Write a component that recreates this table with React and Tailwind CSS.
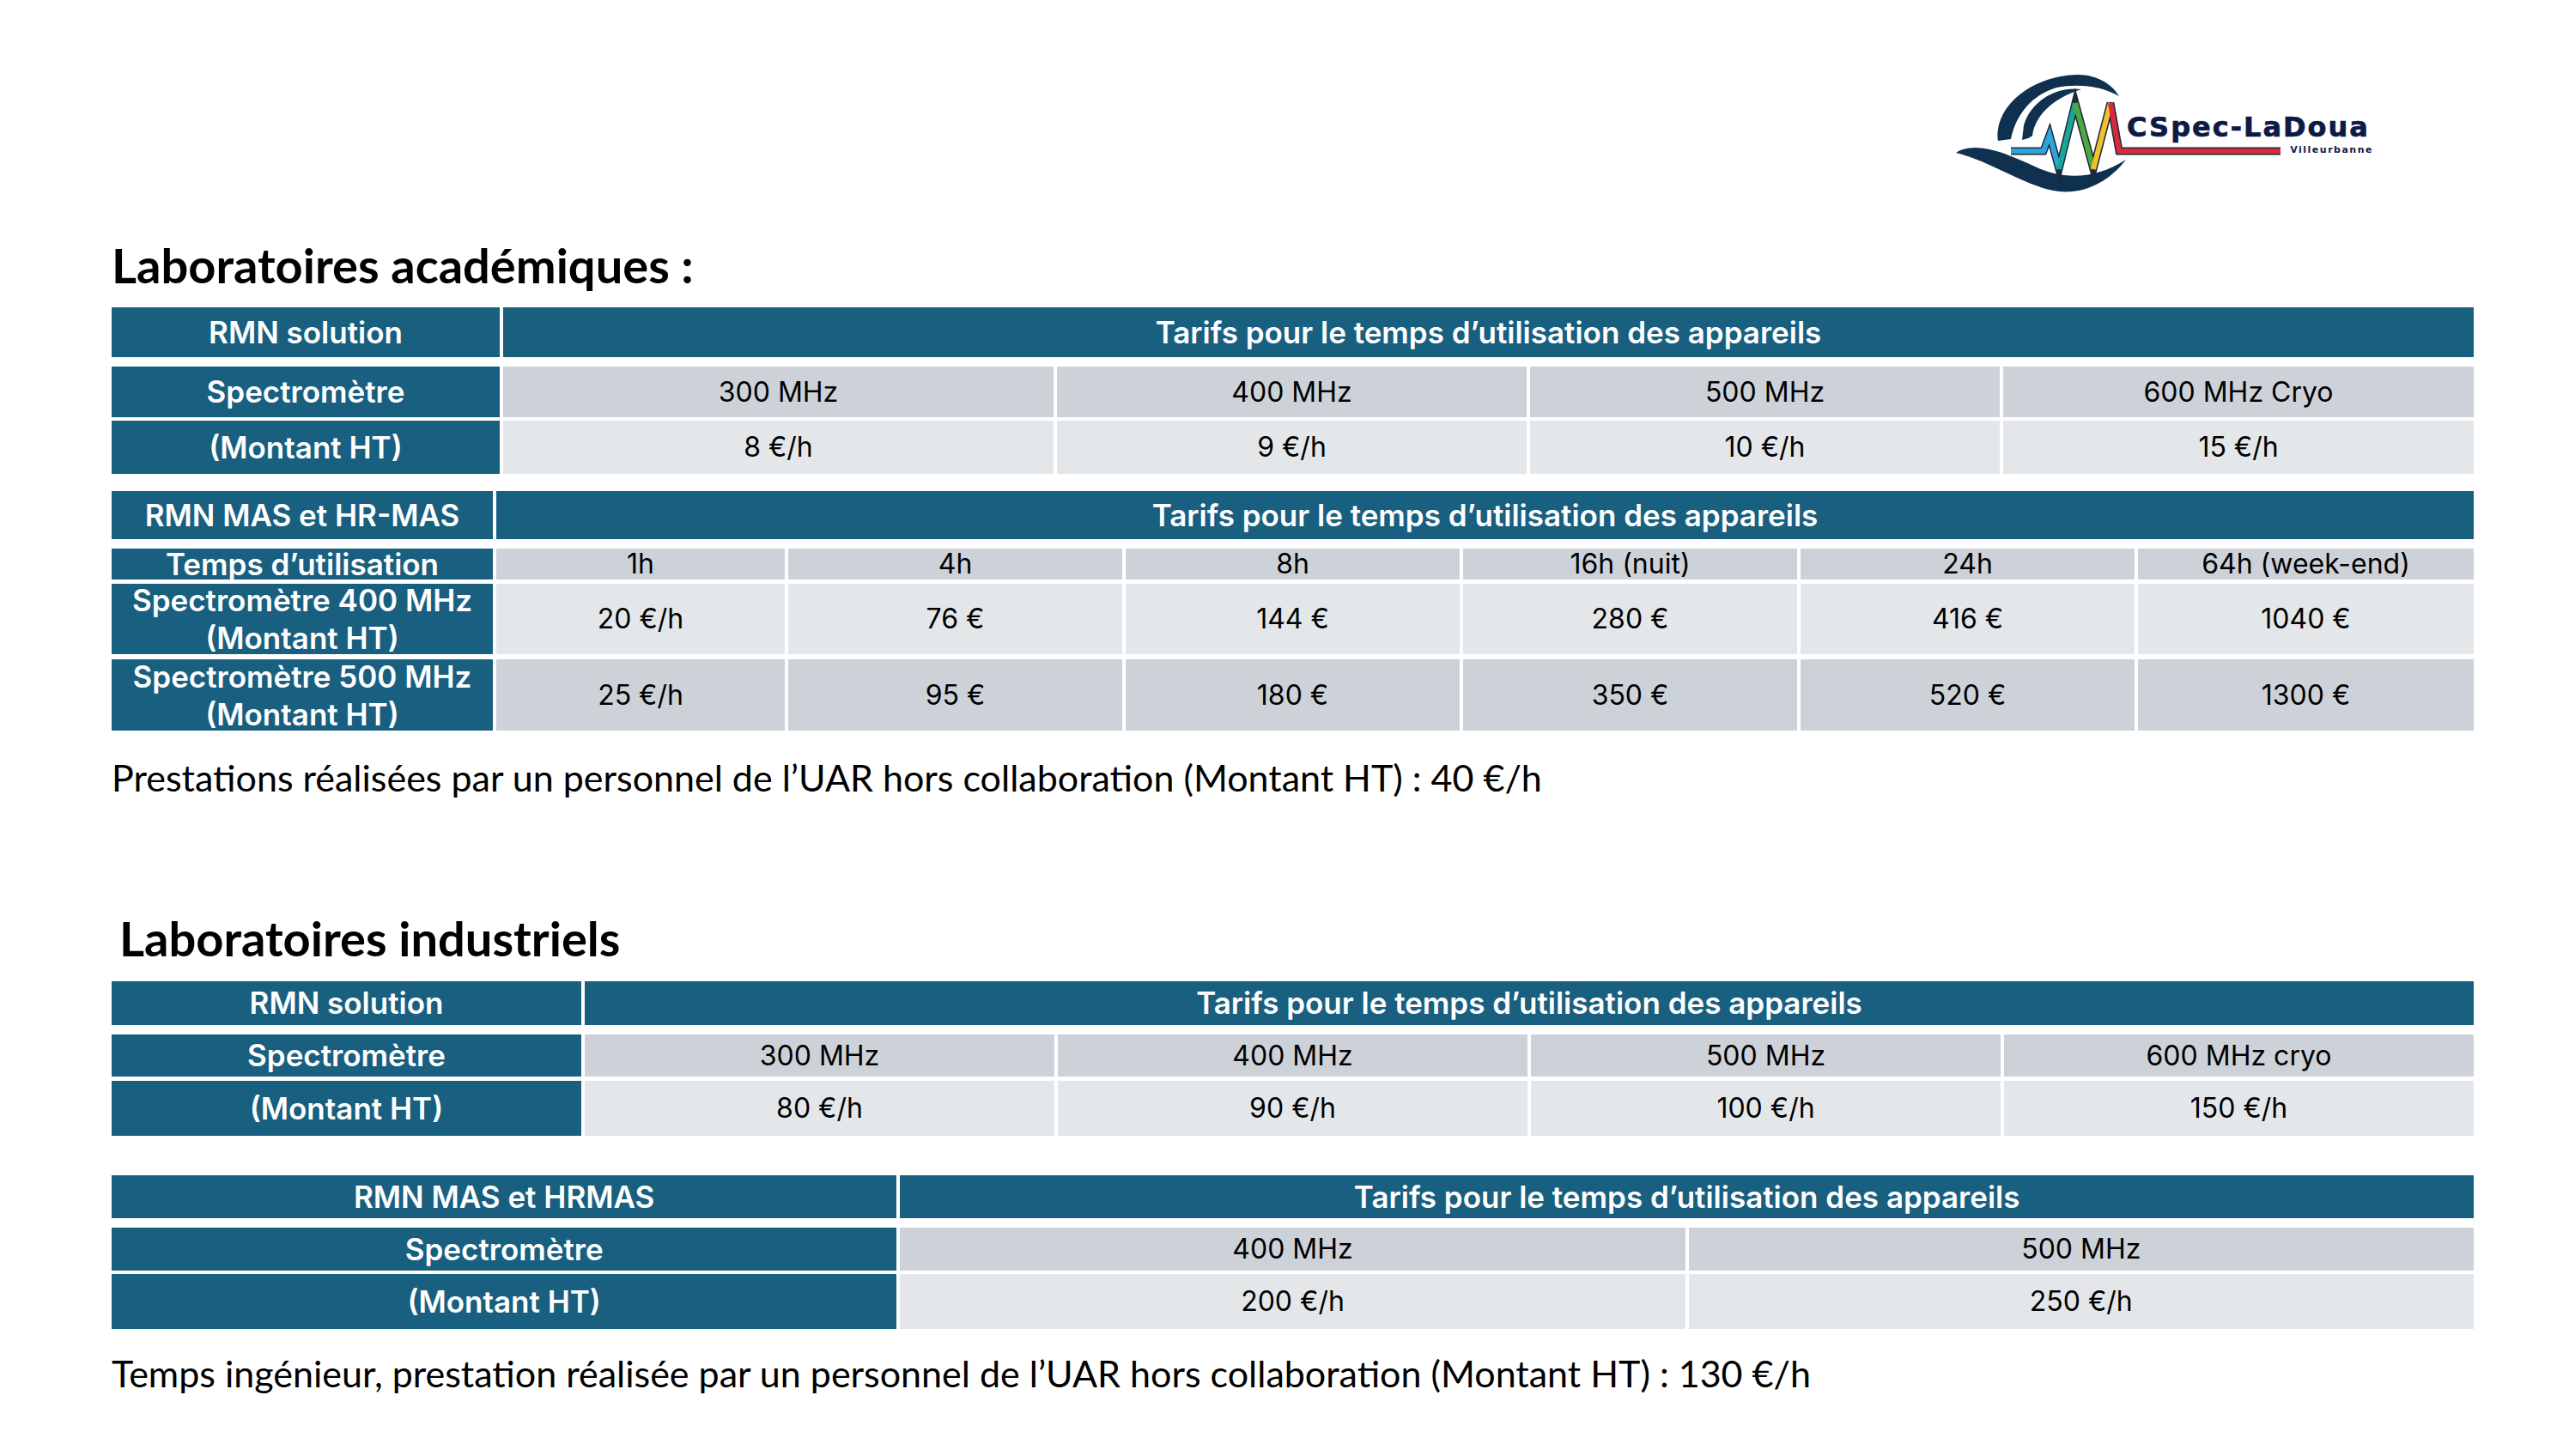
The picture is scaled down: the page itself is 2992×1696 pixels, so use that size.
import React from "react";

const head = "bg-[#185f80] text-white font-semibold text-[35px]";
const dark = "bg-[#cdd2d9] text-black";
const light = "bg-[#e4e7ea] text-black";

function Cell({ tone, lead = "leading-none", className = "", children }) {
  return (
    <div className={`flex items-center justify-center text-center ${lead} ${tone} ${className}`}>
      {children}
    </div>
  );
}

const TARIFS = "Tarifs pour le temps d’utilisation des appareils";

function Logo() {
  return (
    <div className="relative w-[500px] h-[150px]">
      <svg width="500" height="150" viewBox="0 0 500 150" className="absolute inset-0">
        <path d="M57 84 C52 45 95 8 150 7 C172 7 190 18 198 32 C178 20 150 17 125 22 C98 30 78 52 72 82 Z" fill="#10304f" />
        <path d="M154 24 C125 20 95 38 87 66 L85 83 C90 82 95 80 97 78 C100 55 120 35 154 24 Z" fill="#10304f" />
        <path d="M8 98 C30 84 62 96 100 114 C132 129 168 130 206 106 C186 132 158 146 128 143 C90 138 50 108 8 98 Z" fill="#10304f" />
        <polyline points="72,96 110,96 117,77 128,117 147,40 168,117 188,40 198,96 386,96" stroke="#1b2a3a" strokeWidth="9" fill="none" />
        <polyline points="72,96 110,96 117,77 128,117" stroke="#2ea3dc" strokeWidth="6" fill="none" />
        <polyline points="128,117 147,40" stroke="#1ba596" strokeWidth="6" fill="none" />
        <polyline points="147,40 168,117" stroke="#4fa83e" strokeWidth="6" fill="none" />
        <polyline points="168,117 188,40" stroke="#f0c22f" strokeWidth="6" fill="none" />
        <polyline points="188,40 198,96 386,96" stroke="#d92a3d" strokeWidth="6" fill="none" />
      </svg>
      <span className="absolute left-[207px] top-[52px] font-['DejaVu_Sans',sans-serif] font-bold text-[32px] leading-none tracking-[2px] text-[#0d1a46] [-webkit-text-stroke:0.7px_#0d1a46]">
        CSpec-LaDoua
      </span>
      <span className="absolute right-[6px] top-[89px] font-['DejaVu_Sans',sans-serif] font-bold text-[11px] leading-none tracking-[1.5px] text-[#0d1a46]">
        Villeurbanne
      </span>
    </div>
  );
}

function App() {
  const acadFreq = ["300 MHz", "400 MHz", "500 MHz", "600 MHz Cryo"];
  const acadPrice = ["8 €/h", "9 €/h", "10 €/h", "15 €/h"];
  const durations = ["1h", "4h", "8h", "16h (nuit)", "24h", "64h (week-end)"];
  const s400 = ["20 €/h", "76 €", "144 €", "280 €", "416 €", "1040 €"];
  const s500 = ["25 €/h", "95 €", "180 €", "350 €", "520 €", "1300 €"];
  const indFreq = ["300 MHz", "400 MHz", "500 MHz", "600 MHz cryo"];
  const indPrice = ["80 €/h", "90 €/h", "100 €/h", "150 €/h"];

  const cols1 = "grid grid-cols-[452px_641px_547px_547px_1fr] gap-x-[4px]";
  const cols2 = "grid grid-cols-[444px_336px_389px_389px_389px_389px_1fr] gap-x-[4px]";

  return (
    <div className="w-[2992px] h-[1696px] bg-white overflow-hidden font-['Inter',sans-serif] text-[32px] text-black">
      <div className="flex justify-end pt-[80px] pr-[222px]">
        <Logo />
      </div>

      <h1 className="mt-[45px] pl-[130px] font-['Lato',sans-serif] font-bold text-[56px] leading-[67px]">
        Laboratoires académiques :
      </h1>

      <div className="ml-[130px] w-[2751px] mt-[16px]">
        <div className="grid grid-cols-[452px_1fr] grid-rows-[58px] gap-x-[4px]">
          <Cell tone={head}>RMN solution</Cell>
          <Cell tone={head}>{TARIFS}</Cell>
        </div>
        <div className={`${cols1} grid-rows-[59px] mt-[11px]`}>
          <Cell tone={head}>Spectromètre</Cell>
          {acadFreq.map((f) => (
            <Cell key={f} tone={dark}>{f}</Cell>
          ))}
        </div>
        <div className={`${cols1} grid-rows-[62px] mt-[4px]`}>
          <Cell tone={head}>(Montant HT)</Cell>
          {acadPrice.map((p) => (
            <Cell key={p} tone={light}>{p}</Cell>
          ))}
        </div>

        <div className="grid grid-cols-[444px_1fr] grid-rows-[56px] gap-x-[4px] mt-[20px]">
          <Cell tone={head}>RMN MAS et HR-MAS</Cell>
          <Cell tone={head}>{TARIFS}</Cell>
        </div>
        <div className={`${cols2} grid-rows-[36px] mt-[11px]`}>
          <Cell tone={head}>Temps d’utilisation</Cell>
          {durations.map((d) => (
            <Cell key={d} tone={dark}>{d}</Cell>
          ))}
        </div>
        <div className={`${cols2} grid-rows-[82px] mt-[5px]`}>
          <Cell tone={head} lead="leading-[44px]">
            Spectromètre 400 MHz
            <br />
            (Montant HT)
          </Cell>
          {s400.map((v) => (
            <Cell key={v} tone={light}>{v}</Cell>
          ))}
        </div>
        <div className={`${cols2} grid-rows-[83px] mt-[6px]`}>
          <Cell tone={head} lead="leading-[44px]">
            Spectromètre 500 MHz
            <br />
            (Montant HT)
          </Cell>
          {s500.map((v) => (
            <Cell key={v} tone={dark}>{v}</Cell>
          ))}
        </div>
      </div>

      <p className="mt-[29px] pl-[130px] font-['Lato',sans-serif] text-[43px] leading-[52px]">
        Prestations réalisées par un personnel de l’UAR hors collaboration (Montant HT) : 40 €/h
      </p>

      <h1 className="mt-[127px] pl-[139px] font-['Lato',sans-serif] font-bold text-[56px] leading-[67px]">
        Laboratoires industriels
      </h1>

      <div className="ml-[130px] w-[2751px] mt-[17px]">
        <div className="grid grid-cols-5 grid-rows-[51px] gap-x-[4px]">
          <Cell tone={head}>RMN solution</Cell>
          <Cell tone={head} className="col-span-4">{TARIFS}</Cell>
        </div>
        <div className="grid grid-cols-5 grid-rows-[49px] gap-x-[4px] mt-[11px]">
          <Cell tone={head}>Spectromètre</Cell>
          {indFreq.map((f) => (
            <Cell key={f} tone={dark}>{f}</Cell>
          ))}
        </div>
        <div className="grid grid-cols-5 grid-rows-[64px] gap-x-[4px] mt-[5px]">
          <Cell tone={head}>(Montant HT)</Cell>
          {indPrice.map((p) => (
            <Cell key={p} tone={light}>{p}</Cell>
          ))}
        </div>

        <div className="grid grid-cols-3 grid-rows-[50px] gap-x-[4px] mt-[46px]">
          <Cell tone={head}>RMN MAS et HRMAS</Cell>
          <Cell tone={head} className="col-span-2">{TARIFS}</Cell>
        </div>
        <div className="grid grid-cols-3 grid-rows-[50px] gap-x-[4px] mt-[11px]">
          <Cell tone={head}>Spectromètre</Cell>
          <Cell tone={dark}>400 MHz</Cell>
          <Cell tone={dark}>500 MHz</Cell>
        </div>
        <div className="grid grid-cols-3 grid-rows-[64px] gap-x-[4px] mt-[4px]">
          <Cell tone={head}>(Montant HT)</Cell>
          <Cell tone={light}>200 €/h</Cell>
          <Cell tone={light}>250 €/h</Cell>
        </div>
      </div>

      <p className="mt-[26px] pl-[130px] font-['Lato',sans-serif] text-[43px] leading-[52px]">
        Temps ingénieur, prestation réalisée par un personnel de l’UAR hors collaboration (Montant HT) : 130 €/h
      </p>
    </div>
  );
}

export default App;
